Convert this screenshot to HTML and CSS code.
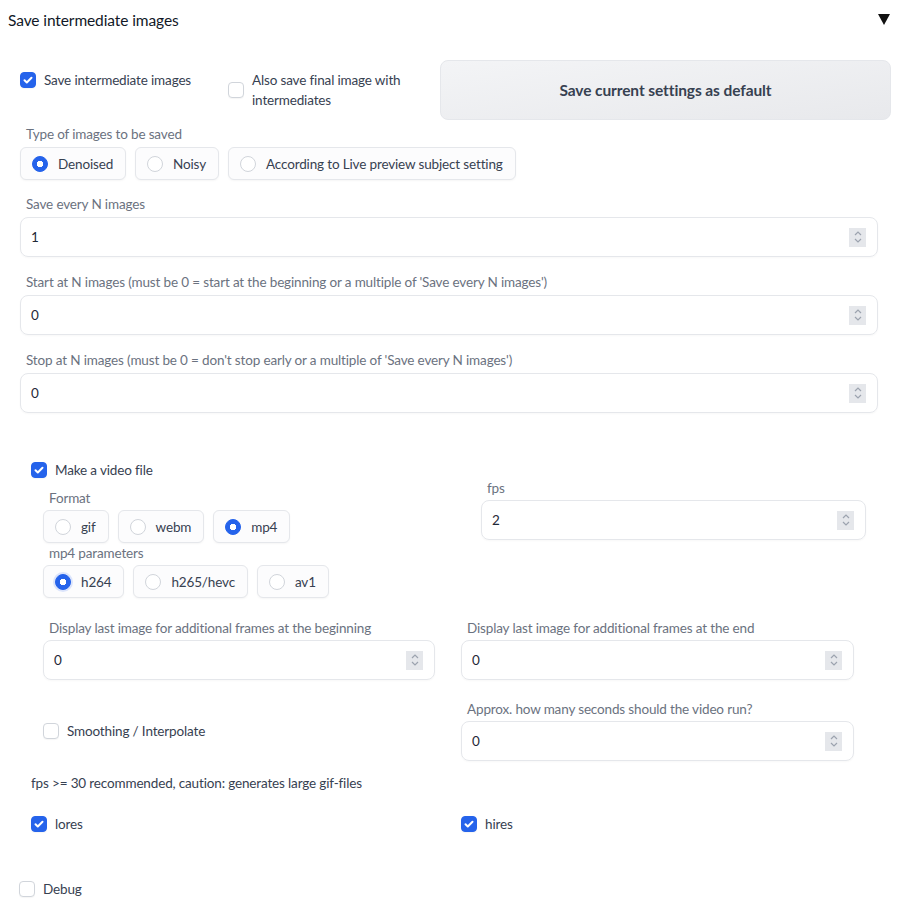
FILE: index.html
```html
<!DOCTYPE html>
<html>
<head>
<meta charset="utf-8">
<link rel="stylesheet" href="styles.css">
</head>
<body>
<div class="accordion">
  <div class="acc-head">
    <span class="acc-title">Save intermediate images</span>
    <svg class="acc-arrow" width="12" height="11" viewBox="0 0 12 11"><polygon points="0,0 12,0 6,11" fill="#111"/></svg>
  </div>

  <div class="top-row">
    <div class="top-checks">
      <label class="check check-1"><span class="box on"><svg viewBox="0 0 16 16" width="16" height="16"><path d="M4.5 8.2l2.3 2.3 4.7-4.8" fill="none" stroke="#fff" stroke-width="2" stroke-linecap="round" stroke-linejoin="round"/></svg></span><span class="ctext">Save intermediate images</span></label>
      <label class="check check-2"><span class="box"></span><span class="ctext wrap">Also save final image with intermediates</span></label>
    </div>
    <button class="btn">Save current settings as default</button>
  </div>

  <div class="main">
    <div class="field radio-field">
      <div class="flabel">Type of images to be saved</div>
      <div class="radios">
        <span class="pill"><span class="radio on"></span>Denoised</span>
        <span class="pill"><span class="radio"></span>Noisy</span>
        <span class="pill"><span class="radio"></span>According to Live preview subject setting</span>
      </div>
    </div>

    <div class="field">
      <div class="flabel">Save every N images</div>
      <div class="num"><span class="val">1</span><span class="spin"><svg width="10" height="14" viewBox="0 0 10 14"><path d="M2 5l3-3 3 3M2 9l3 3 3-3" fill="none" stroke="#9ca3af" stroke-width="1.2"/></svg></span></div>
    </div>
    <div class="field">
      <div class="flabel">Start at N images (must be 0 = start at the beginning or a multiple of 'Save every N images')</div>
      <div class="num"><span class="val">0</span><span class="spin"><svg width="10" height="14" viewBox="0 0 10 14"><path d="M2 5l3-3 3 3M2 9l3 3 3-3" fill="none" stroke="#9ca3af" stroke-width="1.2"/></svg></span></div>
    </div>
    <div class="field">
      <div class="flabel">Stop at N images (must be 0 = don't stop early or a multiple of 'Save every N images')</div>
      <div class="num"><span class="val">0</span><span class="spin"><svg width="10" height="14" viewBox="0 0 10 14"><path d="M2 5l3-3 3 3M2 9l3 3 3-3" fill="none" stroke="#9ca3af" stroke-width="1.2"/></svg></span></div>
    </div>
  </div>

  <div class="video">
    <label class="check"><span class="box on"><svg viewBox="0 0 16 16" width="16" height="16"><path d="M4.5 8.2l2.3 2.3 4.7-4.8" fill="none" stroke="#fff" stroke-width="2" stroke-linecap="round" stroke-linejoin="round"/></svg></span><span class="ctext">Make a video file</span></label>

    <div class="vbody">
      <div class="row-a">
        <div class="col">
          <div class="flabel">Format</div>
          <div class="radios">
            <span class="pill"><span class="radio"></span>gif</span>
            <span class="pill"><span class="radio"></span>webm</span>
            <span class="pill"><span class="radio on"></span>mp4</span>
          </div>
          <div class="flabel">mp4 parameters</div>
          <div class="radios">
            <span class="pill"><span class="radio on ring"></span>h264</span>
            <span class="pill"><span class="radio"></span>h265/hevc</span>
            <span class="pill"><span class="radio"></span>av1</span>
          </div>
        </div>
        <div class="col fps-col">
          <div class="flabel">fps</div>
          <div class="num"><span class="val">2</span><span class="spin"><svg width="10" height="14" viewBox="0 0 10 14"><path d="M2 5l3-3 3 3M2 9l3 3 3-3" fill="none" stroke="#9ca3af" stroke-width="1.2"/></svg></span></div>
        </div>
      </div>

      <div class="row-b">
        <div class="col">
          <div class="flabel">Display last image for additional frames at the beginning</div>
          <div class="num"><span class="val">0</span><span class="spin"><svg width="10" height="14" viewBox="0 0 10 14"><path d="M2 5l3-3 3 3M2 9l3 3 3-3" fill="none" stroke="#9ca3af" stroke-width="1.2"/></svg></span></div>
        </div>
        <div class="col">
          <div class="flabel">Display last image for additional frames at the end</div>
          <div class="num"><span class="val">0</span><span class="spin"><svg width="10" height="14" viewBox="0 0 10 14"><path d="M2 5l3-3 3 3M2 9l3 3 3-3" fill="none" stroke="#9ca3af" stroke-width="1.2"/></svg></span></div>
        </div>
      </div>

      <div class="row-c">
        <div class="col smooth-col">
          <label class="check"><span class="box"></span><span class="ctext">Smoothing / Interpolate</span></label>
        </div>
        <div class="col">
          <div class="flabel">Approx. how many seconds should the video run?</div>
          <div class="num"><span class="val">0</span><span class="spin"><svg width="10" height="14" viewBox="0 0 10 14"><path d="M2 5l3-3 3 3M2 9l3 3 3-3" fill="none" stroke="#9ca3af" stroke-width="1.2"/></svg></span></div>
        </div>
      </div>
    </div>

    <p class="note">fps &gt;= 30 recommended, caution: generates large gif-files</p>

    <div class="res-row">
      <label class="check"><span class="box on"><svg viewBox="0 0 16 16" width="16" height="16"><path d="M4.5 8.2l2.3 2.3 4.7-4.8" fill="none" stroke="#fff" stroke-width="2" stroke-linecap="round" stroke-linejoin="round"/></svg></span><span class="ctext">lores</span></label>
      <label class="check"><span class="box on"><svg viewBox="0 0 16 16" width="16" height="16"><path d="M4.5 8.2l2.3 2.3 4.7-4.8" fill="none" stroke="#fff" stroke-width="2" stroke-linecap="round" stroke-linejoin="round"/></svg></span><span class="ctext">hires</span></label>
    </div>
  </div>

  <div class="debug">
    <label class="check"><span class="box"></span><span class="ctext">Debug</span></label>
  </div>
</div>
</body>
</html>
```

FILE: styles.css
```css
* { box-sizing: border-box; }
body {
  margin: 0;
  background: #fff;
  font-family: Lato, "Open Sans", sans-serif;
  font-size: 13.5px;
  letter-spacing: -0.15px;
  color: #374151;
}
.accordion { width: 897px; }
.acc-head {
  height: 40px;
  display: flex;
  align-items: center;
  justify-content: space-between;
  padding: 0 7px 0 8px;
}
.acc-title { font-size: 15.5px; color: #111827; letter-spacing: -0.1px; }
.acc-arrow { display: block; margin-top: -1px; }

.top-row {
  display: flex;
  margin-top: 20px;
  padding-left: 20px;
  height: 60px;
}
.top-checks {
  display: flex;
  align-items: flex-start;
  padding-top: 10px;
  width: 420px;
}
.check { display: flex; align-items: center; gap: 8px; line-height: 20px; }
.check-1 { width: 208px; flex: none; }
.ctext.wrap { width: 175px; }
.box {
  width: 16px; height: 16px;
  border: 1px solid #d1d5db;
  border-radius: 4px;
  background: #fff;
  flex: none;
  display: block;
  box-shadow: 0 1px 1px rgba(0,0,0,0.04);
}
.box.on { background: #2563eb; border-color: #2563eb; }
.box svg { display: block; margin: -1px; }

.btn {
  width: 451px;
  height: 60px;
  border: 1px solid #e5e7eb;
  border-radius: 8px;
  background: linear-gradient(to bottom right, #f3f4f6, #e8e9ec);
  font-family: inherit;
  font-size: 15.5px;
  letter-spacing: -0.1px;
  font-weight: 700;
  color: #374151;
}

.main { padding: 4px 19px 0 20px; }
.field { margin-bottom: 15px; }
.field.radio-field { margin-bottom: 14px; }
.flabel {
  line-height: 20px;
  color: #6b7280;
  padding-left: 6px;
  margin-bottom: 3px;
}
.vbody .flabel { margin-bottom: 2px; }
.radios { display: flex; gap: 9px; }
.pill {
  display: flex;
  align-items: center;
  gap: 10px;
  height: 33px;
  padding: 0 12px 0 11px;
  border: 1px solid #e5e7eb;
  border-radius: 6px;
  background: #fcfcfd;
  box-shadow: 0 1px 2px rgba(0,0,0,0.04);
}
.radio {
  width: 16px; height: 16px;
  border-radius: 50%;
  border: 1px solid #d1d5db;
  background: #fff;
  flex: none;
}
.radio.on {
  background: #2563eb radial-gradient(circle, #fff 0 3px, transparent 3.5px);
  border-color: #2563eb;
}
.radio.ring { box-shadow: 0 0 0 2px #dbe4fb; }

.num {
  height: 40px;
  border: 1px solid #e5e7eb;
  border-radius: 8px;
  display: flex;
  align-items: center;
  justify-content: space-between;
  padding: 0 11px 0 10px;
  box-shadow: 0 1px 2px rgba(0,0,0,0.03);
}
.val { color: #1f2937; }
.spin {
  width: 17px; height: 19px;
  background: #e5e7eb;
  display: flex;
  align-items: center;
  justify-content: center;
}

.video { padding-left: 31px; margin-top: 47px; }
.vbody { padding-left: 12px; }
.row-a {
  display: grid;
  grid-template-columns: 418px 385px;
  column-gap: 20px;
  margin-top: -2px;
}
.row-a .col:first-child { padding-top: 10px; }
.row-b {
  display: grid;
  grid-template-columns: 392px 393px;
  column-gap: 26px;
  margin-top: 20px;
}
.row-c {
  display: grid;
  grid-template-columns: 392px 393px;
  column-gap: 26px;
  margin-top: 19px;
}
.smooth-col { padding-top: 22px; }
.note { margin: 12px 0 0; line-height: 20px; color: #374151; }
.res-row {
  display: grid;
  grid-template-columns: 430px 200px;
  margin-top: 21px;
}
.debug { padding-left: 19px; margin-top: 45px; }
```
